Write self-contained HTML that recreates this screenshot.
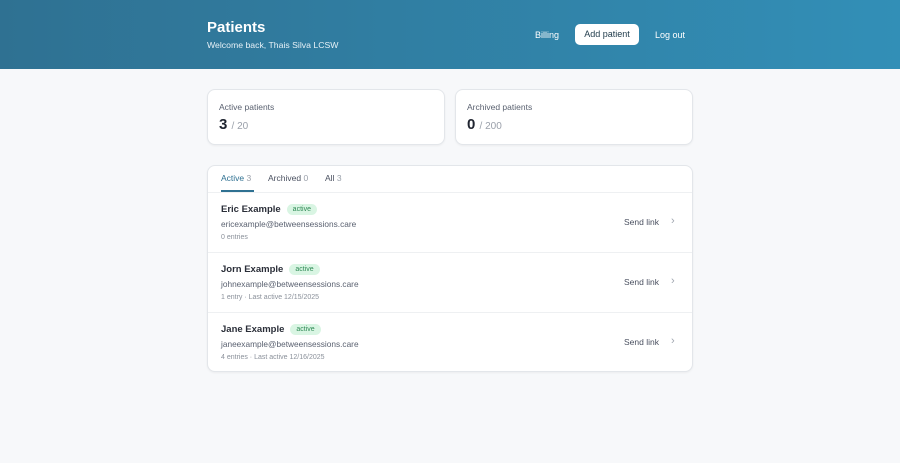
<!DOCTYPE html>
<html><head><style>
*{margin:0;padding:0;box-sizing:border-box}
body{width:900px;height:463px;background:#f7f8fa;font-family:"Liberation Sans",sans-serif;color:#1f2430;position:relative;overflow:hidden}
.hdr{position:absolute;left:0;top:0;width:900px;height:69px;background:linear-gradient(90deg,#2f7192,#328fb7)}
.t{position:absolute;left:207px;top:19px;color:#fff;font-size:15px;font-weight:bold}
.s{position:absolute;left:207px;top:40px;color:#e6f1f7;font-size:8.7px}
.nav{position:absolute;top:30px;color:#fff;font-size:9px;line-height:11px}
.btn{position:absolute;left:575px;top:24px;width:64px;height:21px;background:#fff;border-radius:5px;color:#1f3a4a;font-size:9px;text-align:center;line-height:21px}
.card{position:absolute;background:#fff;border:1px solid #e3e6ea;border-radius:8px;box-shadow:0 1px 2px rgba(0,0,0,.05)}
.lbl{position:absolute;left:11px;top:12px;font-size:8.5px;color:#5a6170}
.num{position:absolute;left:11px;top:26px;font-size:15px;font-weight:bold}
.num span{font-size:10px;color:#9aa0aa;font-weight:normal}
.tab{position:absolute;top:7px;font-size:8.5px;color:#4a5060}
.tab i{font-style:normal;color:#9aa0aa}
.row{position:absolute;left:0;width:486px;height:60px;border-top:1px solid #eef0f2}
.nm{position:absolute;left:13px;top:11px;font-size:9.5px;font-weight:bold;color:#2a2e38}
.bd{display:inline-block;margin-left:6px;background:#d9f5e3;color:#2f8a55;font-size:7px;font-weight:normal;padding:2px 6px;border-radius:7px;vertical-align:1px}
.em{position:absolute;left:13px;top:26px;font-size:8.3px;color:#5a6170}
.en{position:absolute;left:13px;top:41px;font-size:7px;color:#8a909a}
.sl{position:absolute;left:416px;top:24px;font-size:8.5px;color:#4a5060}
.ch{position:absolute;left:463px;top:22px;font-size:11px;color:#a0a6b0}
</style></head><body>
<div class="hdr"></div>
<div class="t">Patients</div>
<div class="s">Welcome back, Thais Silva LCSW</div>
<div class="nav" style="left:535px">Billing</div>
<div class="btn">Add patient</div>
<div class="nav" style="left:655px">Log out</div>
<div class="card" style="left:207px;top:89px;width:238px;height:56px"><div class="lbl">Active patients</div><div class="num">3 <span>/ 20</span></div></div>
<div class="card" style="left:455px;top:89px;width:238px;height:56px"><div class="lbl">Archived patients</div><div class="num">0 <span>/ 200</span></div></div>
<div class="card" style="left:207px;top:165px;width:486px;height:207px;overflow:hidden">
<div class="tab" style="left:13px;color:#2f7192">Active <i>3</i></div>
<div style="position:absolute;left:13px;top:24px;width:33px;height:2px;background:#2f7192"></div>
<div class="tab" style="left:60px">Archived <i>0</i></div>
<div class="tab" style="left:117px">All <i>3</i></div>
<div class="row" style="top:26px"><div class="nm">Eric Example<span class="bd">active</span></div><div class="em">ericexample@betweensessions.care</div><div class="en">0 entries</div><div class="sl">Send link</div><div class="ch">›</div></div>
<div class="row" style="top:86px"><div class="nm">Jorn Example<span class="bd">active</span></div><div class="em">johnexample@betweensessions.care</div><div class="en">1 entry · Last active 12/15/2025</div><div class="sl">Send link</div><div class="ch">›</div></div>
<div class="row" style="top:146px"><div class="nm">Jane Example<span class="bd">active</span></div><div class="em">janeexample@betweensessions.care</div><div class="en">4 entries · Last active 12/16/2025</div><div class="sl">Send link</div><div class="ch">›</div></div>
</div>
</body></html>
